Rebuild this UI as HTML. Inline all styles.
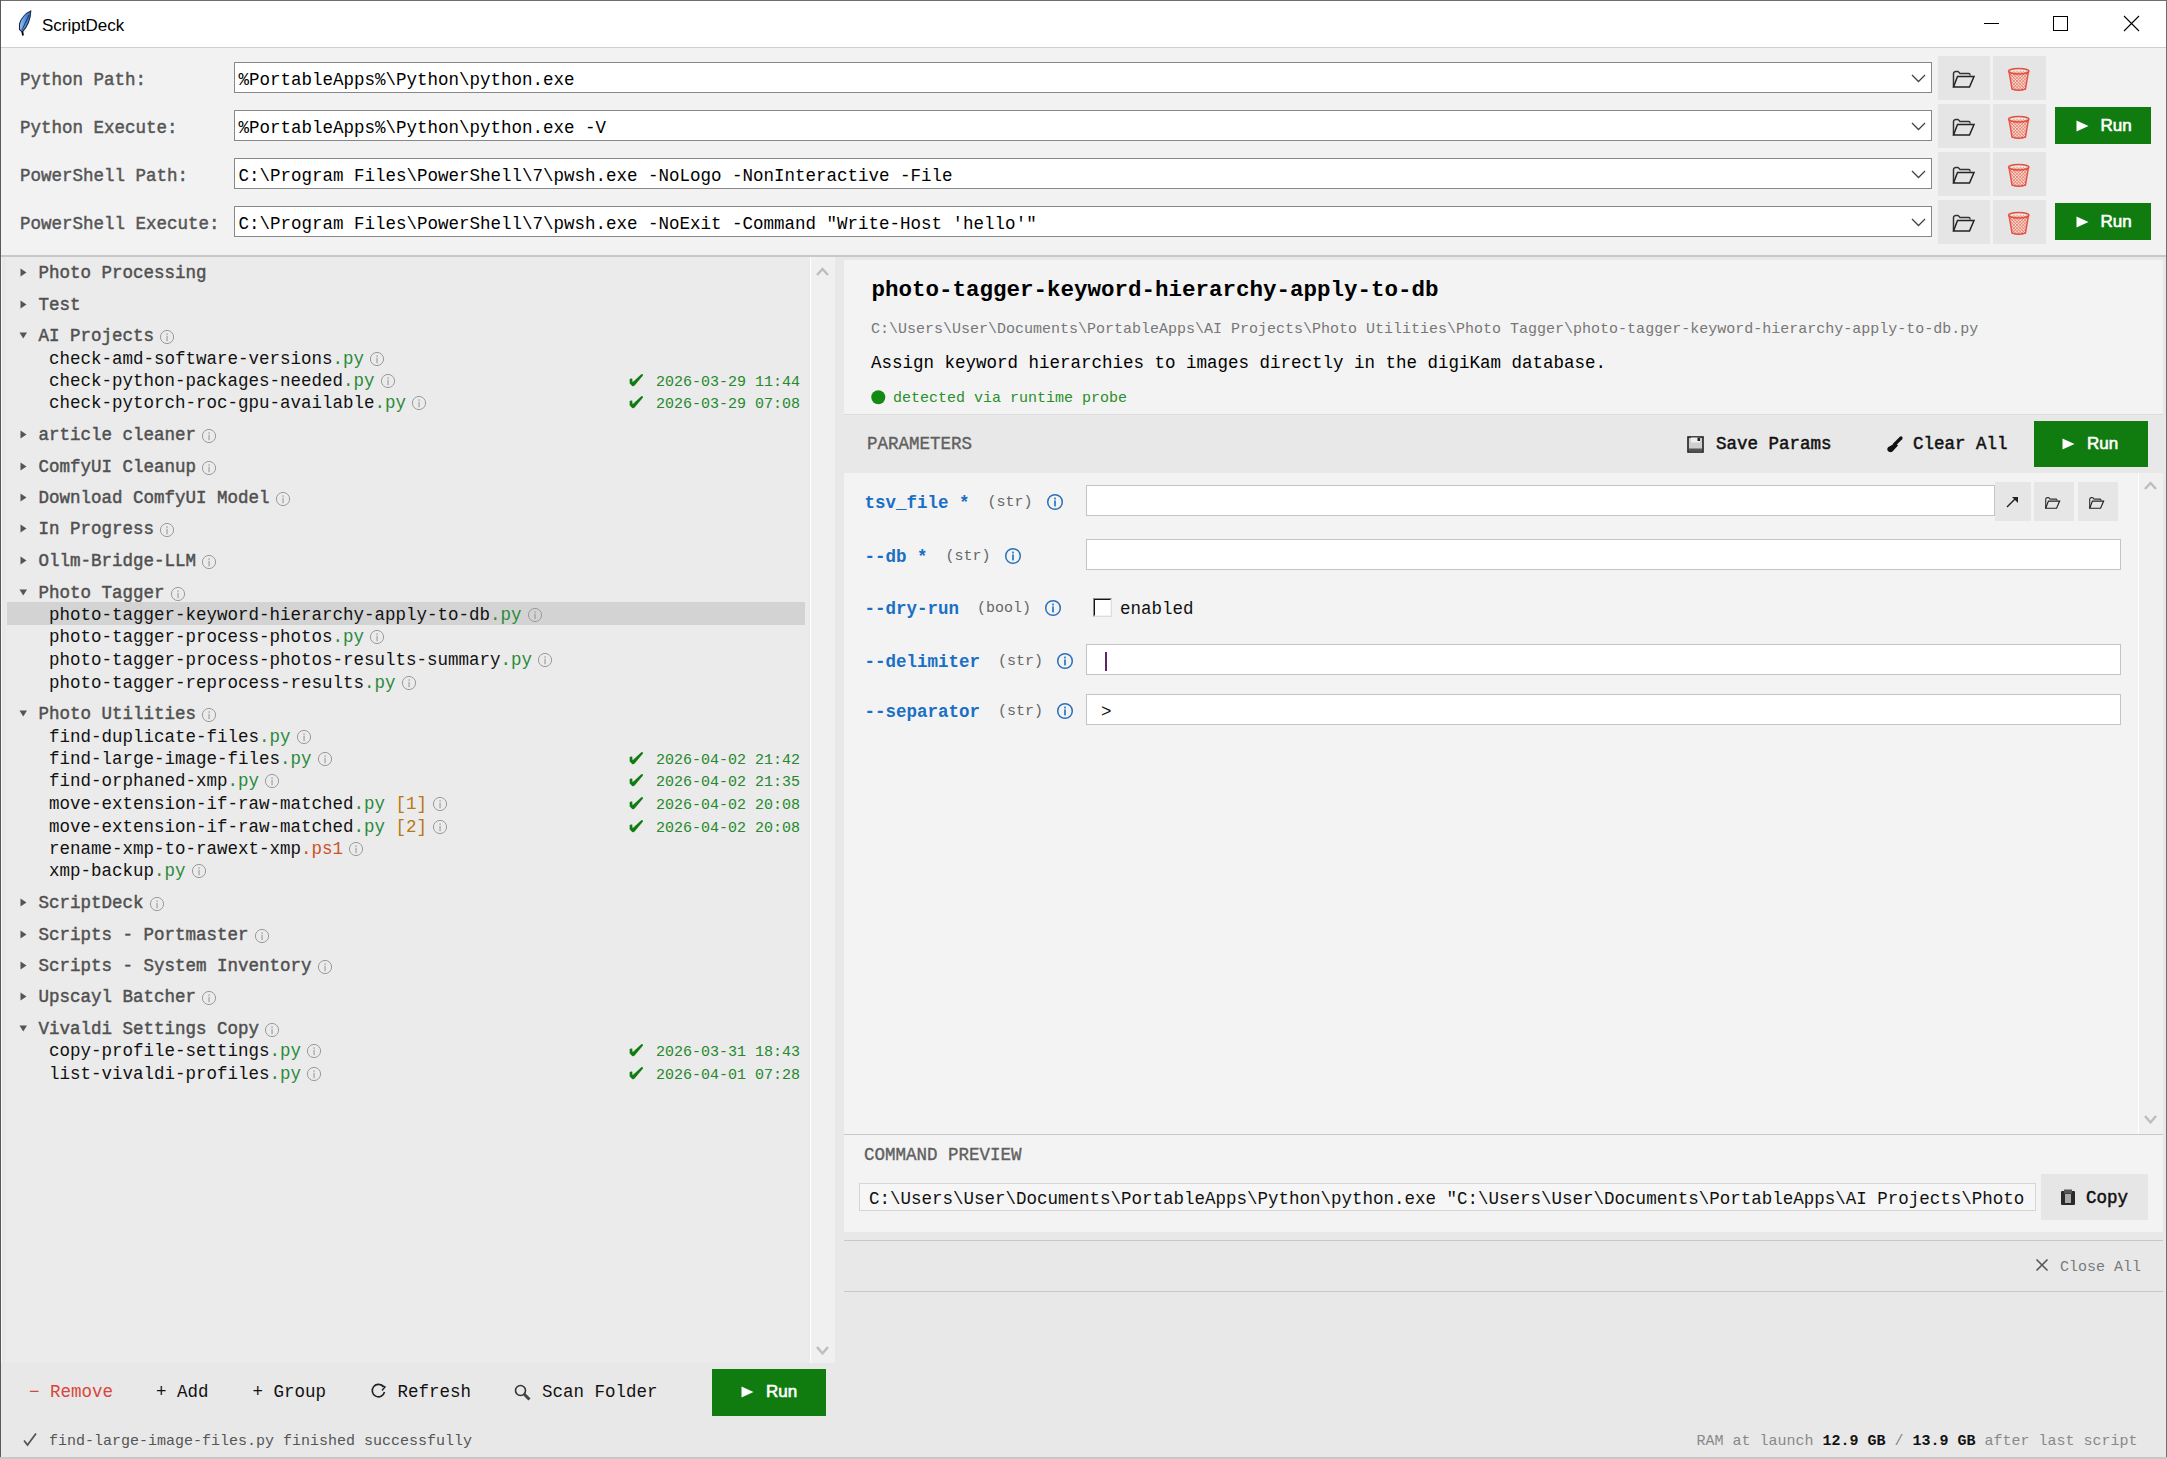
<!DOCTYPE html>
<html><head><meta charset="utf-8"><title>ScriptDeck</title>
<style>
html,body{margin:0;padding:0}
body{width:2167px;height:1459px;position:relative;overflow:hidden;background:#f0f0f0;font-family:'Liberation Sans',sans-serif}
b{font-weight:bold}
</style></head><body>
<div style="position:absolute;left:0px;top:0px;width:2167px;height:47px;background:#ffffff;"></div>
<div style="position:absolute;left:0px;top:47px;width:2167px;height:1px;background:#cfcfcf;"></div>
<div style="position:absolute;left:0px;top:48px;width:2167px;height:208px;background:#f2f2f2;"></div>
<div style="position:absolute;left:0px;top:256px;width:2167px;height:1203px;background:#e8e8e8;"></div>
<svg style="position:absolute;left:18px;top:10px;" width="15" height="26" viewBox="0 0 15 26"><defs><linearGradient id="fg" x1="0" y1="0" x2="1" y2="0"><stop offset="0" stop-color="#9cc4f4"/><stop offset="0.55" stop-color="#4f8ee0"/><stop offset="1" stop-color="#2f6cc0"/></linearGradient></defs><path d="M12.8 1 C8 3 3 8 1.5 14 L1.5 19.5 L4.2 22 C8.5 17.5 12.5 10 12.8 1 Z" fill="url(#fg)" stroke="#1b2a44" stroke-width="1.1"/><path d="M4.3 21.5 L5 25.5" stroke="#000" stroke-width="1.8"/><path d="M11 5 L4 20" stroke="#10203a" stroke-width="0.8"/></svg>
<div style="position:absolute;left:42px;top:14px;font-family:'Liberation Sans', sans-serif;font-size:17px;font-weight:normal;line-height:24px;white-space:pre;color:#000;">ScriptDeck</div>
<div style="position:absolute;left:1984px;top:23px;width:15px;height:1px;background:#000;"></div>
<div style="position:absolute;left:2053px;top:16px;width:15px;height:15px;background:transparent;border:1px solid #000;box-sizing:border-box"></div>
<svg style="position:absolute;left:2123px;top:15px;" width="17" height="17" viewBox="0 0 17 17"><path d="M1 1 L16 16 M16 1 L1 16" stroke="#000" stroke-width="1.1"/></svg>
<div style="position:absolute;left:20px;top:68px;font-family:'Liberation Mono', monospace;font-size:17.5px;font-weight:normal;line-height:24px;white-space:pre;color:#555555;-webkit-text-stroke:0.45px #555555">Python Path:</div>
<div style="position:absolute;left:234px;top:62px;width:1698px;height:31px;background:#fff;border:1px solid #888888;box-sizing:border-box"></div>
<div style="position:absolute;left:238.5px;top:68px;font-family:'Liberation Mono', monospace;font-size:17.5px;font-weight:normal;line-height:24px;white-space:pre;color:#000;">%PortableApps%\Python\python.exe</div>
<svg style="position:absolute;left:1911px;top:74px;" width="15" height="9" viewBox="0 0 15 9"><path d="M1 1 L7.5 7.5 L14 1" fill="none" stroke="#444" stroke-width="1.3"/></svg>
<div style="position:absolute;left:1938px;top:56px;width:52px;height:44px;background:#e5e5e5;"></div>
<svg style="position:absolute;left:1951px;top:69px;" width="25" height="20" viewBox="0 0 25 20"><path d="M2.5 18 L2.5 4.5 Q2.8 2.5 5 2.5 L7 2.5 L9 4.5 L18 4.5 Q19 4.6 19.2 6.5" fill="none" stroke="#333" stroke-width="1.5"/><path d="M2.5 18 L6.5 7.5 L23 7.5 L18.5 18 Z" fill="none" stroke="#222" stroke-width="1.5"/></svg>
<div style="position:absolute;left:1993px;top:56px;width:53px;height:44px;background:#e5e5e5;"></div>
<svg style="position:absolute;left:2007px;top:67px;" width="24" height="25" viewBox="0 0 24 25"><defs><clipPath id="tc"><path d="M2 4.5 L5 22 Q11.5 24.5 18.5 22 L21.5 4.5 Z"/></clipPath></defs><path d="M2 4.5 L5 22 Q11.5 24.5 18.5 22 L21.5 4.5 Z" fill="#f3d9d4"/><g clip-path="url(#tc)" stroke="#ea6f5e" stroke-width="0.75"><path d="M-12.8 4 L7.199999999999999 24"/><path d="M7.199999999999999 4 L-12.8 24"/><path d="M-9.600000000000001 4 L10.399999999999999 24"/><path d="M10.399999999999999 4 L-9.600000000000001 24"/><path d="M-6.4 4 L13.6 24"/><path d="M13.6 4 L-6.4 24"/><path d="M-3.2 4 L16.8 24"/><path d="M16.8 4 L-3.2 24"/><path d="M0.0 4 L20.0 24"/><path d="M20.0 4 L0.0 24"/><path d="M3.2 4 L23.2 24"/><path d="M23.2 4 L3.2 24"/><path d="M6.4 4 L26.4 24"/><path d="M26.4 4 L6.4 24"/><path d="M9.600000000000001 4 L29.6 24"/><path d="M29.6 4 L9.600000000000001 24"/><path d="M12.8 4 L32.8 24"/><path d="M32.8 4 L12.8 24"/><path d="M16.0 4 L36.0 24"/><path d="M36.0 4 L16.0 24"/><path d="M19.200000000000003 4 L39.2 24"/><path d="M39.2 4 L19.200000000000003 24"/><path d="M22.400000000000002 4 L42.400000000000006 24"/><path d="M42.400000000000006 4 L22.400000000000002 24"/></g><path d="M2 4.5 L5 22 Q11.5 24.5 18.5 22 L21.5 4.5" fill="none" stroke="#e4503e" stroke-width="1.4"/><ellipse cx="11.75" cy="4.3" rx="10.2" ry="2.8" fill="none" stroke="#e4503e" stroke-width="1.5"/></svg>
<div style="position:absolute;left:20px;top:116px;font-family:'Liberation Mono', monospace;font-size:17.5px;font-weight:normal;line-height:24px;white-space:pre;color:#555555;-webkit-text-stroke:0.45px #555555">Python Execute:</div>
<div style="position:absolute;left:234px;top:110px;width:1698px;height:31px;background:#fff;border:1px solid #888888;box-sizing:border-box"></div>
<div style="position:absolute;left:238.5px;top:116px;font-family:'Liberation Mono', monospace;font-size:17.5px;font-weight:normal;line-height:24px;white-space:pre;color:#000;">%PortableApps%\Python\python.exe -V</div>
<svg style="position:absolute;left:1911px;top:122px;" width="15" height="9" viewBox="0 0 15 9"><path d="M1 1 L7.5 7.5 L14 1" fill="none" stroke="#444" stroke-width="1.3"/></svg>
<div style="position:absolute;left:1938px;top:104px;width:52px;height:44px;background:#e5e5e5;"></div>
<svg style="position:absolute;left:1951px;top:117px;" width="25" height="20" viewBox="0 0 25 20"><path d="M2.5 18 L2.5 4.5 Q2.8 2.5 5 2.5 L7 2.5 L9 4.5 L18 4.5 Q19 4.6 19.2 6.5" fill="none" stroke="#333" stroke-width="1.5"/><path d="M2.5 18 L6.5 7.5 L23 7.5 L18.5 18 Z" fill="none" stroke="#222" stroke-width="1.5"/></svg>
<div style="position:absolute;left:1993px;top:104px;width:53px;height:44px;background:#e5e5e5;"></div>
<svg style="position:absolute;left:2007px;top:115px;" width="24" height="25" viewBox="0 0 24 25"><defs><clipPath id="tc"><path d="M2 4.5 L5 22 Q11.5 24.5 18.5 22 L21.5 4.5 Z"/></clipPath></defs><path d="M2 4.5 L5 22 Q11.5 24.5 18.5 22 L21.5 4.5 Z" fill="#f3d9d4"/><g clip-path="url(#tc)" stroke="#ea6f5e" stroke-width="0.75"><path d="M-12.8 4 L7.199999999999999 24"/><path d="M7.199999999999999 4 L-12.8 24"/><path d="M-9.600000000000001 4 L10.399999999999999 24"/><path d="M10.399999999999999 4 L-9.600000000000001 24"/><path d="M-6.4 4 L13.6 24"/><path d="M13.6 4 L-6.4 24"/><path d="M-3.2 4 L16.8 24"/><path d="M16.8 4 L-3.2 24"/><path d="M0.0 4 L20.0 24"/><path d="M20.0 4 L0.0 24"/><path d="M3.2 4 L23.2 24"/><path d="M23.2 4 L3.2 24"/><path d="M6.4 4 L26.4 24"/><path d="M26.4 4 L6.4 24"/><path d="M9.600000000000001 4 L29.6 24"/><path d="M29.6 4 L9.600000000000001 24"/><path d="M12.8 4 L32.8 24"/><path d="M32.8 4 L12.8 24"/><path d="M16.0 4 L36.0 24"/><path d="M36.0 4 L16.0 24"/><path d="M19.200000000000003 4 L39.2 24"/><path d="M39.2 4 L19.200000000000003 24"/><path d="M22.400000000000002 4 L42.400000000000006 24"/><path d="M42.400000000000006 4 L22.400000000000002 24"/></g><path d="M2 4.5 L5 22 Q11.5 24.5 18.5 22 L21.5 4.5" fill="none" stroke="#e4503e" stroke-width="1.4"/><ellipse cx="11.75" cy="4.3" rx="10.2" ry="2.8" fill="none" stroke="#e4503e" stroke-width="1.5"/></svg>
<div style="position:absolute;left:2055px;top:107px;width:96px;height:37px;background:#107c10;"></div>
<svg style="position:absolute;left:2075.5px;top:120px;" width="14" height="12" viewBox="0 0 14 12"><path d="M0.5 0.5 L12.5 6 L0.5 11.5 Z" fill="#fff"/></svg>
<div style="position:absolute;left:2100.5px;top:114px;font-family:'Liberation Sans', sans-serif;font-size:17px;font-weight:normal;line-height:24px;white-space:pre;color:#fff;-webkit-text-stroke:0.6px #fff">Run</div>
<div style="position:absolute;left:20px;top:164px;font-family:'Liberation Mono', monospace;font-size:17.5px;font-weight:normal;line-height:24px;white-space:pre;color:#555555;-webkit-text-stroke:0.45px #555555">PowerShell Path:</div>
<div style="position:absolute;left:234px;top:158px;width:1698px;height:31px;background:#fff;border:1px solid #888888;box-sizing:border-box"></div>
<div style="position:absolute;left:238.5px;top:164px;font-family:'Liberation Mono', monospace;font-size:17.5px;font-weight:normal;line-height:24px;white-space:pre;color:#000;">C:\Program Files\PowerShell\7\pwsh.exe -NoLogo -NonInteractive -File</div>
<svg style="position:absolute;left:1911px;top:170px;" width="15" height="9" viewBox="0 0 15 9"><path d="M1 1 L7.5 7.5 L14 1" fill="none" stroke="#444" stroke-width="1.3"/></svg>
<div style="position:absolute;left:1938px;top:152px;width:52px;height:44px;background:#e5e5e5;"></div>
<svg style="position:absolute;left:1951px;top:165px;" width="25" height="20" viewBox="0 0 25 20"><path d="M2.5 18 L2.5 4.5 Q2.8 2.5 5 2.5 L7 2.5 L9 4.5 L18 4.5 Q19 4.6 19.2 6.5" fill="none" stroke="#333" stroke-width="1.5"/><path d="M2.5 18 L6.5 7.5 L23 7.5 L18.5 18 Z" fill="none" stroke="#222" stroke-width="1.5"/></svg>
<div style="position:absolute;left:1993px;top:152px;width:53px;height:44px;background:#e5e5e5;"></div>
<svg style="position:absolute;left:2007px;top:163px;" width="24" height="25" viewBox="0 0 24 25"><defs><clipPath id="tc"><path d="M2 4.5 L5 22 Q11.5 24.5 18.5 22 L21.5 4.5 Z"/></clipPath></defs><path d="M2 4.5 L5 22 Q11.5 24.5 18.5 22 L21.5 4.5 Z" fill="#f3d9d4"/><g clip-path="url(#tc)" stroke="#ea6f5e" stroke-width="0.75"><path d="M-12.8 4 L7.199999999999999 24"/><path d="M7.199999999999999 4 L-12.8 24"/><path d="M-9.600000000000001 4 L10.399999999999999 24"/><path d="M10.399999999999999 4 L-9.600000000000001 24"/><path d="M-6.4 4 L13.6 24"/><path d="M13.6 4 L-6.4 24"/><path d="M-3.2 4 L16.8 24"/><path d="M16.8 4 L-3.2 24"/><path d="M0.0 4 L20.0 24"/><path d="M20.0 4 L0.0 24"/><path d="M3.2 4 L23.2 24"/><path d="M23.2 4 L3.2 24"/><path d="M6.4 4 L26.4 24"/><path d="M26.4 4 L6.4 24"/><path d="M9.600000000000001 4 L29.6 24"/><path d="M29.6 4 L9.600000000000001 24"/><path d="M12.8 4 L32.8 24"/><path d="M32.8 4 L12.8 24"/><path d="M16.0 4 L36.0 24"/><path d="M36.0 4 L16.0 24"/><path d="M19.200000000000003 4 L39.2 24"/><path d="M39.2 4 L19.200000000000003 24"/><path d="M22.400000000000002 4 L42.400000000000006 24"/><path d="M42.400000000000006 4 L22.400000000000002 24"/></g><path d="M2 4.5 L5 22 Q11.5 24.5 18.5 22 L21.5 4.5" fill="none" stroke="#e4503e" stroke-width="1.4"/><ellipse cx="11.75" cy="4.3" rx="10.2" ry="2.8" fill="none" stroke="#e4503e" stroke-width="1.5"/></svg>
<div style="position:absolute;left:20px;top:212px;font-family:'Liberation Mono', monospace;font-size:17.5px;font-weight:normal;line-height:24px;white-space:pre;color:#555555;-webkit-text-stroke:0.45px #555555">PowerShell Execute:</div>
<div style="position:absolute;left:234px;top:206px;width:1698px;height:31px;background:#fff;border:1px solid #888888;box-sizing:border-box"></div>
<div style="position:absolute;left:238.5px;top:212px;font-family:'Liberation Mono', monospace;font-size:17.5px;font-weight:normal;line-height:24px;white-space:pre;color:#000;">C:\Program Files\PowerShell\7\pwsh.exe -NoExit -Command &quot;Write-Host &#x27;hello&#x27;&quot;</div>
<svg style="position:absolute;left:1911px;top:218px;" width="15" height="9" viewBox="0 0 15 9"><path d="M1 1 L7.5 7.5 L14 1" fill="none" stroke="#444" stroke-width="1.3"/></svg>
<div style="position:absolute;left:1938px;top:200px;width:52px;height:44px;background:#e5e5e5;"></div>
<svg style="position:absolute;left:1951px;top:213px;" width="25" height="20" viewBox="0 0 25 20"><path d="M2.5 18 L2.5 4.5 Q2.8 2.5 5 2.5 L7 2.5 L9 4.5 L18 4.5 Q19 4.6 19.2 6.5" fill="none" stroke="#333" stroke-width="1.5"/><path d="M2.5 18 L6.5 7.5 L23 7.5 L18.5 18 Z" fill="none" stroke="#222" stroke-width="1.5"/></svg>
<div style="position:absolute;left:1993px;top:200px;width:53px;height:44px;background:#e5e5e5;"></div>
<svg style="position:absolute;left:2007px;top:211px;" width="24" height="25" viewBox="0 0 24 25"><defs><clipPath id="tc"><path d="M2 4.5 L5 22 Q11.5 24.5 18.5 22 L21.5 4.5 Z"/></clipPath></defs><path d="M2 4.5 L5 22 Q11.5 24.5 18.5 22 L21.5 4.5 Z" fill="#f3d9d4"/><g clip-path="url(#tc)" stroke="#ea6f5e" stroke-width="0.75"><path d="M-12.8 4 L7.199999999999999 24"/><path d="M7.199999999999999 4 L-12.8 24"/><path d="M-9.600000000000001 4 L10.399999999999999 24"/><path d="M10.399999999999999 4 L-9.600000000000001 24"/><path d="M-6.4 4 L13.6 24"/><path d="M13.6 4 L-6.4 24"/><path d="M-3.2 4 L16.8 24"/><path d="M16.8 4 L-3.2 24"/><path d="M0.0 4 L20.0 24"/><path d="M20.0 4 L0.0 24"/><path d="M3.2 4 L23.2 24"/><path d="M23.2 4 L3.2 24"/><path d="M6.4 4 L26.4 24"/><path d="M26.4 4 L6.4 24"/><path d="M9.600000000000001 4 L29.6 24"/><path d="M29.6 4 L9.600000000000001 24"/><path d="M12.8 4 L32.8 24"/><path d="M32.8 4 L12.8 24"/><path d="M16.0 4 L36.0 24"/><path d="M36.0 4 L16.0 24"/><path d="M19.200000000000003 4 L39.2 24"/><path d="M39.2 4 L19.200000000000003 24"/><path d="M22.400000000000002 4 L42.400000000000006 24"/><path d="M42.400000000000006 4 L22.400000000000002 24"/></g><path d="M2 4.5 L5 22 Q11.5 24.5 18.5 22 L21.5 4.5" fill="none" stroke="#e4503e" stroke-width="1.4"/><ellipse cx="11.75" cy="4.3" rx="10.2" ry="2.8" fill="none" stroke="#e4503e" stroke-width="1.5"/></svg>
<div style="position:absolute;left:2055px;top:203px;width:96px;height:37px;background:#107c10;"></div>
<svg style="position:absolute;left:2075.5px;top:216px;" width="14" height="12" viewBox="0 0 14 12"><path d="M0.5 0.5 L12.5 6 L0.5 11.5 Z" fill="#fff"/></svg>
<div style="position:absolute;left:2100.5px;top:210px;font-family:'Liberation Sans', sans-serif;font-size:17px;font-weight:normal;line-height:24px;white-space:pre;color:#fff;-webkit-text-stroke:0.6px #fff">Run</div>
<div style="position:absolute;left:0px;top:255px;width:2167px;height:2px;background:#c8c8c8;"></div>
<div style="position:absolute;left:1px;top:257px;width:1px;height:1106px;background:#f6f6f6;"></div>
<div style="position:absolute;left:6px;top:257px;width:803px;height:1106px;background:#ebebeb;"></div>
<div style="position:absolute;left:810px;top:257px;width:1px;height:1106px;background:#ffffff;"></div>
<div style="position:absolute;left:811px;top:257px;width:24px;height:1106px;background:#f0f0f0;"></div>
<svg style="position:absolute;left:816px;top:267px;" width="13" height="9" viewBox="0 0 13 9"><path d="M1 8 L6.5 2 L12 8" fill="none" stroke="#bdbdbd" stroke-width="2.4"/></svg>
<svg style="position:absolute;left:816px;top:1346px;" width="13" height="10" viewBox="0 0 13 10"><path d="M1 1 L6.5 7.5 L12 1" fill="none" stroke="#bdbdbd" stroke-width="2.4"/></svg>
<div style="position:absolute;left:835px;top:257px;width:9px;height:1106px;background:#e8e8e8;"></div>
<svg style="position:absolute;left:20px;top:268px;" width="7" height="9" viewBox="0 0 7 9"><path d="M0.5 0.5 L6.5 4.5 L0.5 8.5 Z" fill="#555"/></svg>
<div style="position:absolute;left:38.5px;top:261px;font-family:'Liberation Mono', monospace;font-size:17.5px;font-weight:normal;line-height:24px;white-space:pre;color:#505050;-webkit-text-stroke:0.45px #505050">Photo Processing</div>
<svg style="position:absolute;left:20px;top:300px;" width="7" height="9" viewBox="0 0 7 9"><path d="M0.5 0.5 L6.5 4.5 L0.5 8.5 Z" fill="#555"/></svg>
<div style="position:absolute;left:38.5px;top:293px;font-family:'Liberation Mono', monospace;font-size:17.5px;font-weight:normal;line-height:24px;white-space:pre;color:#505050;-webkit-text-stroke:0.45px #505050">Test</div>
<svg style="position:absolute;left:19px;top:332px;" width="9" height="7" viewBox="0 0 9 7"><path d="M0.5 0.5 L8 0.5 L4.25 6.5 Z" fill="#555"/></svg>
<div style="position:absolute;left:38.5px;top:324px;font-family:'Liberation Mono', monospace;font-size:17.5px;font-weight:normal;line-height:24px;white-space:pre;color:#505050;-webkit-text-stroke:0.45px #505050">AI Projects</div>
<svg style="position:absolute;left:159.0px;top:328.5px;" width="16" height="16" viewBox="0 0 16 16"><circle cx="8" cy="8" r="6.6" fill="none" stroke="#9a9a9a" stroke-width="1"/><rect x="7.5" y="4.3" width="1.1" height="1.6" fill="#9a9a9a"/><rect x="7.5" y="6.8" width="1.1" height="5.4" fill="#9a9a9a"/></svg>
<div style="position:absolute;left:49px;top:347px;font-family:'Liberation Mono', monospace;font-size:17.5px;font-weight:normal;line-height:24px;white-space:pre;color:#111;">check-amd-software-versions<span style="color:#2a8a3a">.py</span></div>
<svg style="position:absolute;left:369.0px;top:351px;" width="16" height="16" viewBox="0 0 16 16"><circle cx="8" cy="8" r="6.6" fill="none" stroke="#9a9a9a" stroke-width="1"/><rect x="7.5" y="4.3" width="1.1" height="1.6" fill="#9a9a9a"/><rect x="7.5" y="6.8" width="1.1" height="5.4" fill="#9a9a9a"/></svg>
<div style="position:absolute;left:49px;top:369px;font-family:'Liberation Mono', monospace;font-size:17.5px;font-weight:normal;line-height:24px;white-space:pre;color:#111;">check-python-packages-needed<span style="color:#2a8a3a">.py</span></div>
<svg style="position:absolute;left:379.5px;top:373px;" width="16" height="16" viewBox="0 0 16 16"><circle cx="8" cy="8" r="6.6" fill="none" stroke="#9a9a9a" stroke-width="1"/><rect x="7.5" y="4.3" width="1.1" height="1.6" fill="#9a9a9a"/><rect x="7.5" y="6.8" width="1.1" height="5.4" fill="#9a9a9a"/></svg>
<svg style="position:absolute;left:628px;top:372px;" width="16" height="16" viewBox="0 0 16 16"><path d="M1.6 7.2 Q2.6 6.1 4.2 6.6 L4.6 10.2 L13.3 2.2 Q14.9 1.6 15 3.4 L6.8 13.2 Q5.6 14.6 4.2 13.9 L1.7 11.6 Z" fill="#127c12"/></svg>
<div style="position:absolute;left:656px;top:371px;font-family:'Liberation Mono', monospace;font-size:15px;font-weight:normal;line-height:24px;white-space:pre;color:#24882c;">2026-03-29 11:44</div>
<div style="position:absolute;left:49px;top:391px;font-family:'Liberation Mono', monospace;font-size:17.5px;font-weight:normal;line-height:24px;white-space:pre;color:#111;">check-pytorch-roc-gpu-available<span style="color:#2a8a3a">.py</span></div>
<svg style="position:absolute;left:411.0px;top:395px;" width="16" height="16" viewBox="0 0 16 16"><circle cx="8" cy="8" r="6.6" fill="none" stroke="#9a9a9a" stroke-width="1"/><rect x="7.5" y="4.3" width="1.1" height="1.6" fill="#9a9a9a"/><rect x="7.5" y="6.8" width="1.1" height="5.4" fill="#9a9a9a"/></svg>
<svg style="position:absolute;left:628px;top:394px;" width="16" height="16" viewBox="0 0 16 16"><path d="M1.6 7.2 Q2.6 6.1 4.2 6.6 L4.6 10.2 L13.3 2.2 Q14.9 1.6 15 3.4 L6.8 13.2 Q5.6 14.6 4.2 13.9 L1.7 11.6 Z" fill="#127c12"/></svg>
<div style="position:absolute;left:656px;top:393px;font-family:'Liberation Mono', monospace;font-size:15px;font-weight:normal;line-height:24px;white-space:pre;color:#24882c;">2026-03-29 07:08</div>
<svg style="position:absolute;left:20px;top:430px;" width="7" height="9" viewBox="0 0 7 9"><path d="M0.5 0.5 L6.5 4.5 L0.5 8.5 Z" fill="#555"/></svg>
<div style="position:absolute;left:38.5px;top:423px;font-family:'Liberation Mono', monospace;font-size:17.5px;font-weight:normal;line-height:24px;white-space:pre;color:#505050;-webkit-text-stroke:0.45px #505050">article cleaner</div>
<svg style="position:absolute;left:201.0px;top:427.5px;" width="16" height="16" viewBox="0 0 16 16"><circle cx="8" cy="8" r="6.6" fill="none" stroke="#9a9a9a" stroke-width="1"/><rect x="7.5" y="4.3" width="1.1" height="1.6" fill="#9a9a9a"/><rect x="7.5" y="6.8" width="1.1" height="5.4" fill="#9a9a9a"/></svg>
<svg style="position:absolute;left:20px;top:462px;" width="7" height="9" viewBox="0 0 7 9"><path d="M0.5 0.5 L6.5 4.5 L0.5 8.5 Z" fill="#555"/></svg>
<div style="position:absolute;left:38.5px;top:455px;font-family:'Liberation Mono', monospace;font-size:17.5px;font-weight:normal;line-height:24px;white-space:pre;color:#505050;-webkit-text-stroke:0.45px #505050">ComfyUI Cleanup</div>
<svg style="position:absolute;left:201.0px;top:459.5px;" width="16" height="16" viewBox="0 0 16 16"><circle cx="8" cy="8" r="6.6" fill="none" stroke="#9a9a9a" stroke-width="1"/><rect x="7.5" y="4.3" width="1.1" height="1.6" fill="#9a9a9a"/><rect x="7.5" y="6.8" width="1.1" height="5.4" fill="#9a9a9a"/></svg>
<svg style="position:absolute;left:20px;top:493px;" width="7" height="9" viewBox="0 0 7 9"><path d="M0.5 0.5 L6.5 4.5 L0.5 8.5 Z" fill="#555"/></svg>
<div style="position:absolute;left:38.5px;top:486px;font-family:'Liberation Mono', monospace;font-size:17.5px;font-weight:normal;line-height:24px;white-space:pre;color:#505050;-webkit-text-stroke:0.45px #505050">Download ComfyUI Model</div>
<svg style="position:absolute;left:274.5px;top:490.5px;" width="16" height="16" viewBox="0 0 16 16"><circle cx="8" cy="8" r="6.6" fill="none" stroke="#9a9a9a" stroke-width="1"/><rect x="7.5" y="4.3" width="1.1" height="1.6" fill="#9a9a9a"/><rect x="7.5" y="6.8" width="1.1" height="5.4" fill="#9a9a9a"/></svg>
<svg style="position:absolute;left:20px;top:524px;" width="7" height="9" viewBox="0 0 7 9"><path d="M0.5 0.5 L6.5 4.5 L0.5 8.5 Z" fill="#555"/></svg>
<div style="position:absolute;left:38.5px;top:517px;font-family:'Liberation Mono', monospace;font-size:17.5px;font-weight:normal;line-height:24px;white-space:pre;color:#505050;-webkit-text-stroke:0.45px #505050">In Progress</div>
<svg style="position:absolute;left:159.0px;top:521.5px;" width="16" height="16" viewBox="0 0 16 16"><circle cx="8" cy="8" r="6.6" fill="none" stroke="#9a9a9a" stroke-width="1"/><rect x="7.5" y="4.3" width="1.1" height="1.6" fill="#9a9a9a"/><rect x="7.5" y="6.8" width="1.1" height="5.4" fill="#9a9a9a"/></svg>
<svg style="position:absolute;left:20px;top:556px;" width="7" height="9" viewBox="0 0 7 9"><path d="M0.5 0.5 L6.5 4.5 L0.5 8.5 Z" fill="#555"/></svg>
<div style="position:absolute;left:38.5px;top:549px;font-family:'Liberation Mono', monospace;font-size:17.5px;font-weight:normal;line-height:24px;white-space:pre;color:#505050;-webkit-text-stroke:0.45px #505050">Ollm-Bridge-LLM</div>
<svg style="position:absolute;left:201.0px;top:553.5px;" width="16" height="16" viewBox="0 0 16 16"><circle cx="8" cy="8" r="6.6" fill="none" stroke="#9a9a9a" stroke-width="1"/><rect x="7.5" y="4.3" width="1.1" height="1.6" fill="#9a9a9a"/><rect x="7.5" y="6.8" width="1.1" height="5.4" fill="#9a9a9a"/></svg>
<svg style="position:absolute;left:19px;top:589px;" width="9" height="7" viewBox="0 0 9 7"><path d="M0.5 0.5 L8 0.5 L4.25 6.5 Z" fill="#555"/></svg>
<div style="position:absolute;left:38.5px;top:581px;font-family:'Liberation Mono', monospace;font-size:17.5px;font-weight:normal;line-height:24px;white-space:pre;color:#505050;-webkit-text-stroke:0.45px #505050">Photo Tagger</div>
<svg style="position:absolute;left:169.5px;top:585.5px;" width="16" height="16" viewBox="0 0 16 16"><circle cx="8" cy="8" r="6.6" fill="none" stroke="#9a9a9a" stroke-width="1"/><rect x="7.5" y="4.3" width="1.1" height="1.6" fill="#9a9a9a"/><rect x="7.5" y="6.8" width="1.1" height="5.4" fill="#9a9a9a"/></svg>
<div style="position:absolute;left:7px;top:602px;width:798px;height:23px;background:#d3d3d3;"></div>
<div style="position:absolute;left:49px;top:603px;font-family:'Liberation Mono', monospace;font-size:17.5px;font-weight:normal;line-height:24px;white-space:pre;color:#111;">photo-tagger-keyword-hierarchy-apply-to-db<span style="color:#2a8a3a">.py</span></div>
<svg style="position:absolute;left:526.5px;top:607px;" width="16" height="16" viewBox="0 0 16 16"><circle cx="8" cy="8" r="6.6" fill="none" stroke="#9a9a9a" stroke-width="1"/><rect x="7.5" y="4.3" width="1.1" height="1.6" fill="#9a9a9a"/><rect x="7.5" y="6.8" width="1.1" height="5.4" fill="#9a9a9a"/></svg>
<div style="position:absolute;left:49px;top:625px;font-family:'Liberation Mono', monospace;font-size:17.5px;font-weight:normal;line-height:24px;white-space:pre;color:#111;">photo-tagger-process-photos<span style="color:#2a8a3a">.py</span></div>
<svg style="position:absolute;left:369.0px;top:629px;" width="16" height="16" viewBox="0 0 16 16"><circle cx="8" cy="8" r="6.6" fill="none" stroke="#9a9a9a" stroke-width="1"/><rect x="7.5" y="4.3" width="1.1" height="1.6" fill="#9a9a9a"/><rect x="7.5" y="6.8" width="1.1" height="5.4" fill="#9a9a9a"/></svg>
<div style="position:absolute;left:49px;top:648px;font-family:'Liberation Mono', monospace;font-size:17.5px;font-weight:normal;line-height:24px;white-space:pre;color:#111;">photo-tagger-process-photos-results-summary<span style="color:#2a8a3a">.py</span></div>
<svg style="position:absolute;left:537.0px;top:652px;" width="16" height="16" viewBox="0 0 16 16"><circle cx="8" cy="8" r="6.6" fill="none" stroke="#9a9a9a" stroke-width="1"/><rect x="7.5" y="4.3" width="1.1" height="1.6" fill="#9a9a9a"/><rect x="7.5" y="6.8" width="1.1" height="5.4" fill="#9a9a9a"/></svg>
<div style="position:absolute;left:49px;top:671px;font-family:'Liberation Mono', monospace;font-size:17.5px;font-weight:normal;line-height:24px;white-space:pre;color:#111;">photo-tagger-reprocess-results<span style="color:#2a8a3a">.py</span></div>
<svg style="position:absolute;left:400.5px;top:675px;" width="16" height="16" viewBox="0 0 16 16"><circle cx="8" cy="8" r="6.6" fill="none" stroke="#9a9a9a" stroke-width="1"/><rect x="7.5" y="4.3" width="1.1" height="1.6" fill="#9a9a9a"/><rect x="7.5" y="6.8" width="1.1" height="5.4" fill="#9a9a9a"/></svg>
<svg style="position:absolute;left:19px;top:710px;" width="9" height="7" viewBox="0 0 9 7"><path d="M0.5 0.5 L8 0.5 L4.25 6.5 Z" fill="#555"/></svg>
<div style="position:absolute;left:38.5px;top:702px;font-family:'Liberation Mono', monospace;font-size:17.5px;font-weight:normal;line-height:24px;white-space:pre;color:#505050;-webkit-text-stroke:0.45px #505050">Photo Utilities</div>
<svg style="position:absolute;left:201.0px;top:706.5px;" width="16" height="16" viewBox="0 0 16 16"><circle cx="8" cy="8" r="6.6" fill="none" stroke="#9a9a9a" stroke-width="1"/><rect x="7.5" y="4.3" width="1.1" height="1.6" fill="#9a9a9a"/><rect x="7.5" y="6.8" width="1.1" height="5.4" fill="#9a9a9a"/></svg>
<div style="position:absolute;left:49px;top:725px;font-family:'Liberation Mono', monospace;font-size:17.5px;font-weight:normal;line-height:24px;white-space:pre;color:#111;">find-duplicate-files<span style="color:#2a8a3a">.py</span></div>
<svg style="position:absolute;left:295.5px;top:729px;" width="16" height="16" viewBox="0 0 16 16"><circle cx="8" cy="8" r="6.6" fill="none" stroke="#9a9a9a" stroke-width="1"/><rect x="7.5" y="4.3" width="1.1" height="1.6" fill="#9a9a9a"/><rect x="7.5" y="6.8" width="1.1" height="5.4" fill="#9a9a9a"/></svg>
<div style="position:absolute;left:49px;top:747px;font-family:'Liberation Mono', monospace;font-size:17.5px;font-weight:normal;line-height:24px;white-space:pre;color:#111;">find-large-image-files<span style="color:#2a8a3a">.py</span></div>
<svg style="position:absolute;left:316.5px;top:751px;" width="16" height="16" viewBox="0 0 16 16"><circle cx="8" cy="8" r="6.6" fill="none" stroke="#9a9a9a" stroke-width="1"/><rect x="7.5" y="4.3" width="1.1" height="1.6" fill="#9a9a9a"/><rect x="7.5" y="6.8" width="1.1" height="5.4" fill="#9a9a9a"/></svg>
<svg style="position:absolute;left:628px;top:750px;" width="16" height="16" viewBox="0 0 16 16"><path d="M1.6 7.2 Q2.6 6.1 4.2 6.6 L4.6 10.2 L13.3 2.2 Q14.9 1.6 15 3.4 L6.8 13.2 Q5.6 14.6 4.2 13.9 L1.7 11.6 Z" fill="#127c12"/></svg>
<div style="position:absolute;left:656px;top:749px;font-family:'Liberation Mono', monospace;font-size:15px;font-weight:normal;line-height:24px;white-space:pre;color:#24882c;">2026-04-02 21:42</div>
<div style="position:absolute;left:49px;top:769px;font-family:'Liberation Mono', monospace;font-size:17.5px;font-weight:normal;line-height:24px;white-space:pre;color:#111;">find-orphaned-xmp<span style="color:#2a8a3a">.py</span></div>
<svg style="position:absolute;left:264.0px;top:773px;" width="16" height="16" viewBox="0 0 16 16"><circle cx="8" cy="8" r="6.6" fill="none" stroke="#9a9a9a" stroke-width="1"/><rect x="7.5" y="4.3" width="1.1" height="1.6" fill="#9a9a9a"/><rect x="7.5" y="6.8" width="1.1" height="5.4" fill="#9a9a9a"/></svg>
<svg style="position:absolute;left:628px;top:772px;" width="16" height="16" viewBox="0 0 16 16"><path d="M1.6 7.2 Q2.6 6.1 4.2 6.6 L4.6 10.2 L13.3 2.2 Q14.9 1.6 15 3.4 L6.8 13.2 Q5.6 14.6 4.2 13.9 L1.7 11.6 Z" fill="#127c12"/></svg>
<div style="position:absolute;left:656px;top:771px;font-family:'Liberation Mono', monospace;font-size:15px;font-weight:normal;line-height:24px;white-space:pre;color:#24882c;">2026-04-02 21:35</div>
<div style="position:absolute;left:49px;top:792px;font-family:'Liberation Mono', monospace;font-size:17.5px;font-weight:normal;line-height:24px;white-space:pre;color:#111;">move-extension-if-raw-matched<span style="color:#2a8a3a">.py</span><span style="color:#b87812"> [1]</span></div>
<svg style="position:absolute;left:432.0px;top:796px;" width="16" height="16" viewBox="0 0 16 16"><circle cx="8" cy="8" r="6.6" fill="none" stroke="#9a9a9a" stroke-width="1"/><rect x="7.5" y="4.3" width="1.1" height="1.6" fill="#9a9a9a"/><rect x="7.5" y="6.8" width="1.1" height="5.4" fill="#9a9a9a"/></svg>
<svg style="position:absolute;left:628px;top:795px;" width="16" height="16" viewBox="0 0 16 16"><path d="M1.6 7.2 Q2.6 6.1 4.2 6.6 L4.6 10.2 L13.3 2.2 Q14.9 1.6 15 3.4 L6.8 13.2 Q5.6 14.6 4.2 13.9 L1.7 11.6 Z" fill="#127c12"/></svg>
<div style="position:absolute;left:656px;top:794px;font-family:'Liberation Mono', monospace;font-size:15px;font-weight:normal;line-height:24px;white-space:pre;color:#24882c;">2026-04-02 20:08</div>
<div style="position:absolute;left:49px;top:815px;font-family:'Liberation Mono', monospace;font-size:17.5px;font-weight:normal;line-height:24px;white-space:pre;color:#111;">move-extension-if-raw-matched<span style="color:#2a8a3a">.py</span><span style="color:#b87812"> [2]</span></div>
<svg style="position:absolute;left:432.0px;top:819px;" width="16" height="16" viewBox="0 0 16 16"><circle cx="8" cy="8" r="6.6" fill="none" stroke="#9a9a9a" stroke-width="1"/><rect x="7.5" y="4.3" width="1.1" height="1.6" fill="#9a9a9a"/><rect x="7.5" y="6.8" width="1.1" height="5.4" fill="#9a9a9a"/></svg>
<svg style="position:absolute;left:628px;top:818px;" width="16" height="16" viewBox="0 0 16 16"><path d="M1.6 7.2 Q2.6 6.1 4.2 6.6 L4.6 10.2 L13.3 2.2 Q14.9 1.6 15 3.4 L6.8 13.2 Q5.6 14.6 4.2 13.9 L1.7 11.6 Z" fill="#127c12"/></svg>
<div style="position:absolute;left:656px;top:817px;font-family:'Liberation Mono', monospace;font-size:15px;font-weight:normal;line-height:24px;white-space:pre;color:#24882c;">2026-04-02 20:08</div>
<div style="position:absolute;left:49px;top:837px;font-family:'Liberation Mono', monospace;font-size:17.5px;font-weight:normal;line-height:24px;white-space:pre;color:#111;">rename-xmp-to-rawext-xmp<span style="color:#cc5228">.ps1</span></div>
<svg style="position:absolute;left:348.0px;top:841px;" width="16" height="16" viewBox="0 0 16 16"><circle cx="8" cy="8" r="6.6" fill="none" stroke="#9a9a9a" stroke-width="1"/><rect x="7.5" y="4.3" width="1.1" height="1.6" fill="#9a9a9a"/><rect x="7.5" y="6.8" width="1.1" height="5.4" fill="#9a9a9a"/></svg>
<div style="position:absolute;left:49px;top:859px;font-family:'Liberation Mono', monospace;font-size:17.5px;font-weight:normal;line-height:24px;white-space:pre;color:#111;">xmp-backup<span style="color:#2a8a3a">.py</span></div>
<svg style="position:absolute;left:190.5px;top:863px;" width="16" height="16" viewBox="0 0 16 16"><circle cx="8" cy="8" r="6.6" fill="none" stroke="#9a9a9a" stroke-width="1"/><rect x="7.5" y="4.3" width="1.1" height="1.6" fill="#9a9a9a"/><rect x="7.5" y="6.8" width="1.1" height="5.4" fill="#9a9a9a"/></svg>
<svg style="position:absolute;left:20px;top:898px;" width="7" height="9" viewBox="0 0 7 9"><path d="M0.5 0.5 L6.5 4.5 L0.5 8.5 Z" fill="#555"/></svg>
<div style="position:absolute;left:38.5px;top:891px;font-family:'Liberation Mono', monospace;font-size:17.5px;font-weight:normal;line-height:24px;white-space:pre;color:#505050;-webkit-text-stroke:0.45px #505050">ScriptDeck</div>
<svg style="position:absolute;left:148.5px;top:895.5px;" width="16" height="16" viewBox="0 0 16 16"><circle cx="8" cy="8" r="6.6" fill="none" stroke="#9a9a9a" stroke-width="1"/><rect x="7.5" y="4.3" width="1.1" height="1.6" fill="#9a9a9a"/><rect x="7.5" y="6.8" width="1.1" height="5.4" fill="#9a9a9a"/></svg>
<svg style="position:absolute;left:20px;top:930px;" width="7" height="9" viewBox="0 0 7 9"><path d="M0.5 0.5 L6.5 4.5 L0.5 8.5 Z" fill="#555"/></svg>
<div style="position:absolute;left:38.5px;top:923px;font-family:'Liberation Mono', monospace;font-size:17.5px;font-weight:normal;line-height:24px;white-space:pre;color:#505050;-webkit-text-stroke:0.45px #505050">Scripts - Portmaster</div>
<svg style="position:absolute;left:253.5px;top:927.5px;" width="16" height="16" viewBox="0 0 16 16"><circle cx="8" cy="8" r="6.6" fill="none" stroke="#9a9a9a" stroke-width="1"/><rect x="7.5" y="4.3" width="1.1" height="1.6" fill="#9a9a9a"/><rect x="7.5" y="6.8" width="1.1" height="5.4" fill="#9a9a9a"/></svg>
<svg style="position:absolute;left:20px;top:961px;" width="7" height="9" viewBox="0 0 7 9"><path d="M0.5 0.5 L6.5 4.5 L0.5 8.5 Z" fill="#555"/></svg>
<div style="position:absolute;left:38.5px;top:954px;font-family:'Liberation Mono', monospace;font-size:17.5px;font-weight:normal;line-height:24px;white-space:pre;color:#505050;-webkit-text-stroke:0.45px #505050">Scripts - System Inventory</div>
<svg style="position:absolute;left:316.5px;top:958.5px;" width="16" height="16" viewBox="0 0 16 16"><circle cx="8" cy="8" r="6.6" fill="none" stroke="#9a9a9a" stroke-width="1"/><rect x="7.5" y="4.3" width="1.1" height="1.6" fill="#9a9a9a"/><rect x="7.5" y="6.8" width="1.1" height="5.4" fill="#9a9a9a"/></svg>
<svg style="position:absolute;left:20px;top:992px;" width="7" height="9" viewBox="0 0 7 9"><path d="M0.5 0.5 L6.5 4.5 L0.5 8.5 Z" fill="#555"/></svg>
<div style="position:absolute;left:38.5px;top:985px;font-family:'Liberation Mono', monospace;font-size:17.5px;font-weight:normal;line-height:24px;white-space:pre;color:#505050;-webkit-text-stroke:0.45px #505050">Upscayl Batcher</div>
<svg style="position:absolute;left:201.0px;top:989.5px;" width="16" height="16" viewBox="0 0 16 16"><circle cx="8" cy="8" r="6.6" fill="none" stroke="#9a9a9a" stroke-width="1"/><rect x="7.5" y="4.3" width="1.1" height="1.6" fill="#9a9a9a"/><rect x="7.5" y="6.8" width="1.1" height="5.4" fill="#9a9a9a"/></svg>
<svg style="position:absolute;left:19px;top:1025px;" width="9" height="7" viewBox="0 0 9 7"><path d="M0.5 0.5 L8 0.5 L4.25 6.5 Z" fill="#555"/></svg>
<div style="position:absolute;left:38.5px;top:1017px;font-family:'Liberation Mono', monospace;font-size:17.5px;font-weight:normal;line-height:24px;white-space:pre;color:#505050;-webkit-text-stroke:0.45px #505050">Vivaldi Settings Copy</div>
<svg style="position:absolute;left:264.0px;top:1021.5px;" width="16" height="16" viewBox="0 0 16 16"><circle cx="8" cy="8" r="6.6" fill="none" stroke="#9a9a9a" stroke-width="1"/><rect x="7.5" y="4.3" width="1.1" height="1.6" fill="#9a9a9a"/><rect x="7.5" y="6.8" width="1.1" height="5.4" fill="#9a9a9a"/></svg>
<div style="position:absolute;left:49px;top:1039px;font-family:'Liberation Mono', monospace;font-size:17.5px;font-weight:normal;line-height:24px;white-space:pre;color:#111;">copy-profile-settings<span style="color:#2a8a3a">.py</span></div>
<svg style="position:absolute;left:306.0px;top:1043px;" width="16" height="16" viewBox="0 0 16 16"><circle cx="8" cy="8" r="6.6" fill="none" stroke="#9a9a9a" stroke-width="1"/><rect x="7.5" y="4.3" width="1.1" height="1.6" fill="#9a9a9a"/><rect x="7.5" y="6.8" width="1.1" height="5.4" fill="#9a9a9a"/></svg>
<svg style="position:absolute;left:628px;top:1042px;" width="16" height="16" viewBox="0 0 16 16"><path d="M1.6 7.2 Q2.6 6.1 4.2 6.6 L4.6 10.2 L13.3 2.2 Q14.9 1.6 15 3.4 L6.8 13.2 Q5.6 14.6 4.2 13.9 L1.7 11.6 Z" fill="#127c12"/></svg>
<div style="position:absolute;left:656px;top:1041px;font-family:'Liberation Mono', monospace;font-size:15px;font-weight:normal;line-height:24px;white-space:pre;color:#24882c;">2026-03-31 18:43</div>
<div style="position:absolute;left:49px;top:1062px;font-family:'Liberation Mono', monospace;font-size:17.5px;font-weight:normal;line-height:24px;white-space:pre;color:#111;">list-vivaldi-profiles<span style="color:#2a8a3a">.py</span></div>
<svg style="position:absolute;left:306.0px;top:1066px;" width="16" height="16" viewBox="0 0 16 16"><circle cx="8" cy="8" r="6.6" fill="none" stroke="#9a9a9a" stroke-width="1"/><rect x="7.5" y="4.3" width="1.1" height="1.6" fill="#9a9a9a"/><rect x="7.5" y="6.8" width="1.1" height="5.4" fill="#9a9a9a"/></svg>
<svg style="position:absolute;left:628px;top:1065px;" width="16" height="16" viewBox="0 0 16 16"><path d="M1.6 7.2 Q2.6 6.1 4.2 6.6 L4.6 10.2 L13.3 2.2 Q14.9 1.6 15 3.4 L6.8 13.2 Q5.6 14.6 4.2 13.9 L1.7 11.6 Z" fill="#127c12"/></svg>
<div style="position:absolute;left:656px;top:1064px;font-family:'Liberation Mono', monospace;font-size:15px;font-weight:normal;line-height:24px;white-space:pre;color:#24882c;">2026-04-01 07:28</div>
<div style="position:absolute;left:844px;top:257px;width:1319px;height:3px;background:#e8e8e8;"></div>
<div style="position:absolute;left:844px;top:260px;width:1319px;height:154px;background:#f3f3f3;"></div>
<div style="position:absolute;left:871.5px;top:278px;font-family:'Liberation Mono', monospace;font-size:22.5px;font-weight:bold;line-height:24px;white-space:pre;color:#000;">photo-tagger-keyword-hierarchy-apply-to-db</div>
<div style="position:absolute;left:871px;top:318px;font-family:'Liberation Mono', monospace;font-size:15px;font-weight:normal;line-height:24px;white-space:pre;color:#777777;">C:\Users\User\Documents\PortableApps\AI Projects\Photo Utilities\Photo Tagger\photo-tagger-keyword-hierarchy-apply-to-db.py</div>
<div style="position:absolute;left:871px;top:351px;font-family:'Liberation Mono', monospace;font-size:17.5px;font-weight:normal;line-height:24px;white-space:pre;color:#000;">Assign keyword hierarchies to images directly in the digiKam database.</div>
<svg style="position:absolute;left:871px;top:390px;" width="15" height="15" viewBox="0 0 15 15"><circle cx="7.3" cy="7.3" r="7" fill="#138a13"/></svg>
<div style="position:absolute;left:893px;top:387px;font-family:'Liberation Mono', monospace;font-size:15px;font-weight:normal;line-height:24px;white-space:pre;color:#2a8f2a;">detected via runtime probe</div>
<div style="position:absolute;left:844px;top:414px;width:1319px;height:1px;background:#dcdcdc;"></div>
<div style="position:absolute;left:844px;top:415px;width:1319px;height:58px;background:#e8e8e8;"></div>
<div style="position:absolute;left:867px;top:432px;font-family:'Liberation Mono', monospace;font-size:17.5px;font-weight:normal;line-height:24px;white-space:pre;color:#5f5f5f;-webkit-text-stroke:0.35px #5f5f5f">PARAMETERS</div>
<svg style="position:absolute;left:1687px;top:436px;" width="17" height="17" viewBox="0 0 17 17"><rect x="1" y="1" width="15" height="15" fill="#cfcfcf" stroke="#1e1e1e" stroke-width="1.6"/><rect x="4" y="1.5" width="9" height="5" fill="#f0f0f0"/><rect x="10.5" y="1.5" width="2.5" height="3.5" fill="#222"/><rect x="2" y="12.5" width="13" height="3" fill="#555"/></svg>
<div style="position:absolute;left:1716px;top:432px;font-family:'Liberation Mono', monospace;font-size:17.5px;font-weight:normal;line-height:24px;white-space:pre;color:#111;-webkit-text-stroke:0.5px #111">Save Params</div>
<svg style="position:absolute;left:1884px;top:435px;" width="20" height="18" viewBox="0 0 20 18"><path d="M17 3 L10.5 9.5" stroke="#111" stroke-width="3.2" stroke-linecap="round"/><path d="M11.5 8 L14 10.5 L8.5 16.5 Q6 18 3.8 16 Q2.5 14 4 12.3 Z" fill="#111"/></svg>
<div style="position:absolute;left:1913px;top:432px;font-family:'Liberation Mono', monospace;font-size:17.5px;font-weight:normal;line-height:24px;white-space:pre;color:#111;-webkit-text-stroke:0.5px #111">Clear All</div>
<div style="position:absolute;left:2034px;top:421px;width:114px;height:46px;background:#107c10;"></div>
<svg style="position:absolute;left:2062.0px;top:438px;" width="14" height="12" viewBox="0 0 14 12"><path d="M0.5 0.5 L12.5 6 L0.5 11.5 Z" fill="#fff"/></svg>
<div style="position:absolute;left:2087.0px;top:432px;font-family:'Liberation Sans', sans-serif;font-size:17px;font-weight:normal;line-height:24px;white-space:pre;color:#fff;-webkit-text-stroke:0.6px #fff">Run</div>
<div style="position:absolute;left:844px;top:473px;width:1319px;height:661px;background:#f3f3f3;"></div>
<div style="position:absolute;left:2138px;top:473px;width:1px;height:661px;background:#ffffff;"></div>
<div style="position:absolute;left:2139px;top:473px;width:24px;height:661px;background:#f0f0f0;"></div>
<svg style="position:absolute;left:2144px;top:481px;" width="13" height="9" viewBox="0 0 13 9"><path d="M1 8 L6.5 2 L12 8" fill="none" stroke="#bdbdbd" stroke-width="2.4"/></svg>
<svg style="position:absolute;left:2144px;top:1115px;" width="13" height="10" viewBox="0 0 13 10"><path d="M1 1 L6.5 7.5 L12 1" fill="none" stroke="#bdbdbd" stroke-width="2.4"/></svg>
<div style="position:absolute;left:864.5px;top:491px;font-family:'Liberation Mono', monospace;font-size:17.5px;font-weight:bold;line-height:24px;white-space:pre;color:#1a6fc4;">tsv_file *</div>
<div style="position:absolute;left:987.5px;top:491px;font-family:'Liberation Mono', monospace;font-size:15px;font-weight:normal;line-height:24px;white-space:pre;color:#666666;">(str)</div>
<svg style="position:absolute;left:1045.5px;top:493px;" width="18" height="18" viewBox="0 0 18 18"><circle cx="9" cy="9" r="7.3" fill="none" stroke="#2a6fb8" stroke-width="1.5"/><rect x="8.1" y="4.6" width="1.8" height="1.8" fill="#2a7fc8"/><rect x="8.1" y="7.4" width="1.8" height="6" fill="#2a7fc8"/></svg>
<div style="position:absolute;left:1086px;top:485px;width:909px;height:31px;background:#fff;border:1px solid #c4c4c4;box-sizing:border-box"></div>
<div style="position:absolute;left:1995px;top:482px;width:36px;height:39px;background:#e6e6e6;"></div>
<svg style="position:absolute;left:2006px;top:496px;" width="13" height="12" viewBox="0 0 13 12"><path d="M1 11 L10 2" stroke="#222" stroke-width="1.4"/><path d="M6 1 L12 1 L12 7 Z" fill="#222"/></svg>
<div style="position:absolute;left:2034px;top:482px;width:40px;height:39px;background:#e6e6e6;"></div>
<svg style="position:absolute;left:2044px;top:496px;transform:scale(0.68);transform-origin:0 0" width="25" height="20" viewBox="0 0 25 20"><path d="M2.5 18 L2.5 4.5 Q2.8 2.5 5 2.5 L7 2.5 L9 4.5 L18 4.5 Q19 4.6 19.2 6.5" fill="none" stroke="#333" stroke-width="1.7"/><path d="M2.5 18 L6.5 7.5 L23 7.5 L18.5 18 Z" fill="none" stroke="#222" stroke-width="1.7"/></svg>
<div style="position:absolute;left:2078px;top:482px;width:40px;height:39px;background:#e6e6e6;"></div>
<svg style="position:absolute;left:2088px;top:496px;transform:scale(0.68);transform-origin:0 0" width="25" height="20" viewBox="0 0 25 20"><path d="M2.5 18 L2.5 4.5 Q2.8 2.5 5 2.5 L7 2.5 L9 4.5 L18 4.5 Q19 4.6 19.2 6.5" fill="none" stroke="#333" stroke-width="1.7"/><path d="M2.5 18 L6.5 7.5 L23 7.5 L18.5 18 Z" fill="none" stroke="#222" stroke-width="1.7"/></svg>
<div style="position:absolute;left:864.5px;top:545px;font-family:'Liberation Mono', monospace;font-size:17.5px;font-weight:bold;line-height:24px;white-space:pre;color:#1a6fc4;">--db *</div>
<div style="position:absolute;left:945.5px;top:545px;font-family:'Liberation Mono', monospace;font-size:15px;font-weight:normal;line-height:24px;white-space:pre;color:#666666;">(str)</div>
<svg style="position:absolute;left:1003.5px;top:547px;" width="18" height="18" viewBox="0 0 18 18"><circle cx="9" cy="9" r="7.3" fill="none" stroke="#2a6fb8" stroke-width="1.5"/><rect x="8.1" y="4.6" width="1.8" height="1.8" fill="#2a7fc8"/><rect x="8.1" y="7.4" width="1.8" height="6" fill="#2a7fc8"/></svg>
<div style="position:absolute;left:1086px;top:539px;width:1035px;height:31px;background:#fff;border:1px solid #c4c4c4;box-sizing:border-box"></div>
<div style="position:absolute;left:864.5px;top:597px;font-family:'Liberation Mono', monospace;font-size:17.5px;font-weight:bold;line-height:24px;white-space:pre;color:#1a6fc4;">--dry-run</div>
<div style="position:absolute;left:977.0px;top:597px;font-family:'Liberation Mono', monospace;font-size:15px;font-weight:normal;line-height:24px;white-space:pre;color:#666666;">(bool)</div>
<svg style="position:absolute;left:1044px;top:599px;" width="18" height="18" viewBox="0 0 18 18"><circle cx="9" cy="9" r="7.3" fill="none" stroke="#2a6fb8" stroke-width="1.5"/><rect x="8.1" y="4.6" width="1.8" height="1.8" fill="#2a7fc8"/><rect x="8.1" y="7.4" width="1.8" height="6" fill="#2a7fc8"/></svg>
<div style="position:absolute;left:1093px;top:598px;width:19px;height:19px;box-sizing:border-box;border:1px solid;border-color:#8c8c8c #dedede #dedede #8c8c8c"><div style="width:17px;height:17px;box-sizing:border-box;border:1px solid;border-color:#151515 #f3f3f3 #f3f3f3 #151515;background:#fff"></div></div>
<div style="position:absolute;left:1120px;top:597px;font-family:'Liberation Mono', monospace;font-size:17.5px;font-weight:normal;line-height:24px;white-space:pre;color:#111;">enabled</div>
<div style="position:absolute;left:864.5px;top:650px;font-family:'Liberation Mono', monospace;font-size:17.5px;font-weight:bold;line-height:24px;white-space:pre;color:#1a6fc4;">--delimiter</div>
<div style="position:absolute;left:998.0px;top:650px;font-family:'Liberation Mono', monospace;font-size:15px;font-weight:normal;line-height:24px;white-space:pre;color:#666666;">(str)</div>
<svg style="position:absolute;left:1056px;top:652px;" width="18" height="18" viewBox="0 0 18 18"><circle cx="9" cy="9" r="7.3" fill="none" stroke="#2a6fb8" stroke-width="1.5"/><rect x="8.1" y="4.6" width="1.8" height="1.8" fill="#2a7fc8"/><rect x="8.1" y="7.4" width="1.8" height="6" fill="#2a7fc8"/></svg>
<div style="position:absolute;left:1086px;top:644px;width:1035px;height:31px;background:#fff;border:1px solid #c4c4c4;box-sizing:border-box"></div>
<div style="position:absolute;left:1105px;top:652px;width:2px;height:19px;background:#5a2a60;"></div>
<div style="position:absolute;left:864.5px;top:700px;font-family:'Liberation Mono', monospace;font-size:17.5px;font-weight:bold;line-height:24px;white-space:pre;color:#1a6fc4;">--separator</div>
<div style="position:absolute;left:998.0px;top:700px;font-family:'Liberation Mono', monospace;font-size:15px;font-weight:normal;line-height:24px;white-space:pre;color:#666666;">(str)</div>
<svg style="position:absolute;left:1056px;top:702px;" width="18" height="18" viewBox="0 0 18 18"><circle cx="9" cy="9" r="7.3" fill="none" stroke="#2a6fb8" stroke-width="1.5"/><rect x="8.1" y="4.6" width="1.8" height="1.8" fill="#2a7fc8"/><rect x="8.1" y="7.4" width="1.8" height="6" fill="#2a7fc8"/></svg>
<div style="position:absolute;left:1086px;top:694px;width:1035px;height:31px;background:#fff;border:1px solid #c4c4c4;box-sizing:border-box"></div>
<div style="position:absolute;left:1101px;top:700px;font-family:'Liberation Mono', monospace;font-size:17.5px;font-weight:normal;line-height:24px;white-space:pre;color:#111;">&gt;</div>
<div style="position:absolute;left:844px;top:1134px;width:1319px;height:1px;background:#c8c8c8;"></div>
<div style="position:absolute;left:844px;top:1135px;width:1319px;height:97px;background:#f3f3f3;"></div>
<div style="position:absolute;left:864px;top:1143px;font-family:'Liberation Mono', monospace;font-size:17.5px;font-weight:normal;line-height:24px;white-space:pre;color:#5f5f5f;-webkit-text-stroke:0.35px #5f5f5f">COMMAND PREVIEW</div>
<div style="position:absolute;left:859px;top:1183px;width:1177px;height:28px;background:#f6f6f6;border:1px solid #d6d6d6;box-sizing:border-box"></div>
<div style="position:absolute;left:860px;top:1184px;width:1175px;height:26px;overflow:hidden">
<div style="position:absolute;left:9px;top:3px;font-family:'Liberation Mono', monospace;font-size:17.5px;font-weight:normal;line-height:24px;white-space:pre;color:#111;">C:\Users\User\Documents\PortableApps\Python\python.exe &quot;C:\Users\User\Documents\PortableApps\AI Projects\Photo Utilities\Photo Tagger\photo-tagger-keyword-hierarchy-apply-to-db.py&quot;</div>
</div>
<div style="position:absolute;left:2041px;top:1174px;width:107px;height:46px;background:#e6e6e6;"></div>
<svg style="position:absolute;left:2060px;top:1189px;" width="16" height="17" viewBox="0 0 16 17"><rect x="1" y="2" width="14" height="14" rx="1" fill="#2a2a2a"/><rect x="4" y="0.5" width="8" height="4" fill="#555"/><rect x="5" y="5" width="6" height="9" fill="#aaa"/></svg>
<div style="position:absolute;left:2086px;top:1186px;font-family:'Liberation Mono', monospace;font-size:17.5px;font-weight:normal;line-height:24px;white-space:pre;color:#111;-webkit-text-stroke:0.5px #111">Copy</div>
<div style="position:absolute;left:844px;top:1232px;width:1319px;height:8px;background:#e8e8e8;"></div>
<div style="position:absolute;left:844px;top:1240px;width:1319px;height:1px;background:#c8c8c8;"></div>
<div style="position:absolute;left:844px;top:1241px;width:1319px;height:50px;background:#e8e8e8;"></div>
<svg style="position:absolute;left:2035px;top:1258px;" width="14" height="14" viewBox="0 0 14 14"><path d="M1.5 1.5 L12.5 12.5 M12.5 1.5 L1.5 12.5" stroke="#555" stroke-width="1.6"/></svg>
<div style="position:absolute;left:2060px;top:1256px;font-family:'Liberation Mono', monospace;font-size:15px;font-weight:normal;line-height:24px;white-space:pre;color:#7a7a7a;">Close All</div>
<div style="position:absolute;left:844px;top:1291px;width:1319px;height:1px;background:#c8c8c8;"></div>
<div style="position:absolute;left:844px;top:1292px;width:1319px;height:71px;background:#e8e8e8;"></div>
<div style="position:absolute;left:1px;top:1363px;width:2165px;height:95px;background:#e8e8e8;"></div>
<div style="position:absolute;left:29px;top:1380px;font-family:'Liberation Mono', monospace;font-size:17.5px;font-weight:normal;line-height:24px;white-space:pre;color:#d9453a;">− Remove</div>
<div style="position:absolute;left:156px;top:1380px;font-family:'Liberation Mono', monospace;font-size:17.5px;font-weight:normal;line-height:24px;white-space:pre;color:#111;">+ Add</div>
<div style="position:absolute;left:252.5px;top:1380px;font-family:'Liberation Mono', monospace;font-size:17.5px;font-weight:normal;line-height:24px;white-space:pre;color:#111;">+ Group</div>
<svg style="position:absolute;left:370px;top:1383px;" width="18" height="16" viewBox="0 0 18 16"><path d="M13.5 4 A6.2 6.2 0 1 0 14.5 9" fill="none" stroke="#222" stroke-width="1.6"/><path d="M10.5 1.5 L15 4 L12 7.5" fill="none" stroke="#222" stroke-width="1.4"/></svg>
<div style="position:absolute;left:397.5px;top:1380px;font-family:'Liberation Mono', monospace;font-size:17.5px;font-weight:normal;line-height:24px;white-space:pre;color:#111;">Refresh</div>
<svg style="position:absolute;left:514px;top:1384px;" width="18" height="17" viewBox="0 0 18 17"><circle cx="6.5" cy="6.5" r="5" fill="none" stroke="#333" stroke-width="1.6"/><path d="M10 10 L15.5 15.5" stroke="#444" stroke-width="3"/></svg>
<div style="position:absolute;left:542px;top:1380px;font-family:'Liberation Mono', monospace;font-size:17.5px;font-weight:normal;line-height:24px;white-space:pre;color:#111;">Scan Folder</div>
<div style="position:absolute;left:712px;top:1369px;width:114px;height:47px;background:#107c10;"></div>
<svg style="position:absolute;left:741.0px;top:1386px;" width="14" height="12" viewBox="0 0 14 12"><path d="M0.5 0.5 L12.5 6 L0.5 11.5 Z" fill="#fff"/></svg>
<div style="position:absolute;left:766.0px;top:1380px;font-family:'Liberation Sans', sans-serif;font-size:17px;font-weight:normal;line-height:24px;white-space:pre;color:#fff;-webkit-text-stroke:0.6px #fff">Run</div>
<svg style="position:absolute;left:22px;top:1432px;" width="16" height="15" viewBox="0 0 16 15"><path d="M2 8.5 L5.5 13 L14 1.5" fill="none" stroke="#555" stroke-width="1.8"/></svg>
<div style="position:absolute;left:49px;top:1430px;font-family:'Liberation Mono', monospace;font-size:15px;font-weight:normal;line-height:24px;white-space:pre;color:#555555;">find-large-image-files.py finished successfully</div>
<div style="position:absolute;left:1696.5px;top:1430px;font-family:'Liberation Mono', monospace;font-size:15px;font-weight:normal;line-height:24px;white-space:pre;color:#888888;"><span>RAM at launch </span><b style="color:#111">12.9 GB</b><span> / </span><b style="color:#111">13.9 GB</b><span> after last script</span></div>
<div style="position:absolute;left:0px;top:0px;width:2167px;height:1px;background:#6e6e6e;"></div>
<div style="position:absolute;left:0px;top:0px;width:1px;height:1459px;background:#5a5a5a;"></div>
<div style="position:absolute;left:2166px;top:0px;width:1px;height:1459px;background:#6e6e6e;"></div>
<div style="position:absolute;left:0px;top:1457px;width:2167px;height:2px;background:#c8c8c8;"></div>
</body></html>
